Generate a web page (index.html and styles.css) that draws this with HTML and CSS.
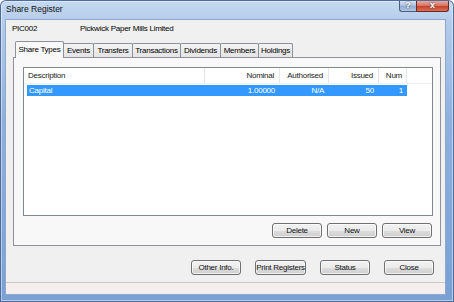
FILE: index.html
```html
<!DOCTYPE html>
<html lang="en">
<head>
  <meta charset="UTF-8" />
  <title>Share Register</title>
  <link rel="stylesheet" href="styles.css">
</head>
<body>
  <div class="window">
    <div class="titlebar">
      <span class="title">Share Register</span>
      <div class="caption-btns">
        <span class="cbtn help">?</span>
        <span class="cbtn close">x</span>
      </div>
    </div>
    <div class="frame">
      <div class="client">
        <div class="company">
          <span class="code">PIC002</span>
          <span class="name">Pickwick Paper Mills Limited</span>
        </div>

        <div class="tabs">
          <span class="tab active">Share Types</span>
          <span class="tab">Events</span>
          <span class="tab">Transfers</span>
          <span class="tab">Transactions</span>
          <span class="tab">Dividends</span>
          <span class="tab">Members</span>
          <span class="tab">Holdings</span>
        </div>

        <div class="panel">
          <div class="list">
            <div class="list-head">
              <span class="col desc">Description</span>
              <span class="col nominal">Nominal</span>
              <span class="col auth">Authorised</span>
              <span class="col issued">Issued</span>
              <span class="col num">Num</span>
              <span class="col filler"></span>
            </div>
            <div class="list-row selected">
              <span class="col desc">Capital</span>
              <span class="col nominal">1.00000</span>
              <span class="col auth">N/A</span>
              <span class="col issued">50</span>
              <span class="col num">1</span>
            </div>
          </div>
          <div class="panel-btns">
            <button class="btn">Delete</button>
            <button class="btn">New</button>
            <button class="btn">View</button>
          </div>
        </div>

        <div class="dialog-btns">
          <button class="btn">Other Info.</button>
          <button class="btn wide">Print Registers</button>
          <button class="btn">Status</button>
          <button class="btn">Close</button>
        </div>

        <div class="statusbar"></div>
      </div>
    </div>
  </div>
</body>
</html>
```

FILE: styles.css
```css
body {
  margin: 0;
  background: #ffffff;
  font-family: "Liberation Sans", Arial, sans-serif;
  font-size: 8px;
  letter-spacing: -0.25px;
  color: #000;
}
.window {
  width: 454px;
  height: 302px;
  box-sizing: border-box;
  background: linear-gradient(#c6d9f0 0%, #b3cbea 8%, #8eb0de 40%, #7aa0d4 100%);
  border-radius: 6px 6px 0 0;
  box-shadow: inset 0 0 0 1px #4d6c9c, inset 0 0 0 2px rgba(255, 255, 255, 0.45);
  display: flex;
  flex-direction: column;
}
.titlebar {
  height: 20px;
  display: flex;
  justify-content: space-between;
  align-items: flex-start;
  padding-left: 6px;
}
.title {
  line-height: 19px;
  font-size: 8.5px;
  letter-spacing: 0;
  color: #111;
}
.caption-btns {
  display: flex;
  margin-right: 5px;
  margin-top: 1px;
}
.cbtn {
  height: 10px;
  line-height: 9px;
  text-align: center;
  color: #fff;
  font-weight: bold;
  font-size: 9px;
  letter-spacing: 0;
  border: 1px solid #4c5f7e;
  border-top: none;
  text-shadow: 0 0 2px #333;
}
.help {
  width: 16px;
  border-radius: 0 0 0 3px;
  background: linear-gradient(#d6e2f1, #a9bfdc 50%, #8fa9cf 51%, #b2c7e3);
  border-right: none;
}
.close {
  width: 31px;
  border-radius: 0 0 3px 0;
  background: linear-gradient(#e9a99c, #d8705d 50%, #c4402a 51%, #d67259);
  border-color: #6e2a22;
}
.frame {
  flex: 1;
  padding: 0 9px 8px 6px;
}
.client {
  width: 439px;
  height: 274px;
  background: #f0f0f0;
  box-shadow: 0 0 0 1px #8ea7cb;
  display: flex;
  flex-direction: column;
}
.company {
  height: 12px;
  line-height: 12px;
  padding: 3px 0 0 6px;
  display: flex;
}
.code {
  width: 68px;
}
.tabs {
  margin-top: 6px;
  height: 16px;
  padding-left: 9px;
  display: flex;
  align-items: flex-end;
  position: relative;
  z-index: 1;
}
.tab {
  box-sizing: border-box;
  height: 14px;
  line-height: 13px;
  text-align: center;
  white-space: nowrap;
  border: 1px solid #8e9199;
  border-bottom: none;
  margin-left: -1px;
  background: linear-gradient(#f3f3f3, #e4e4e4);
  border-radius: 2px 2px 0 0;
}
.tab:nth-child(1) { width: 49px; margin-left: 0; }
.tab:nth-child(2) { width: 31px; }
.tab:nth-child(3) { width: 40px; }
.tab:nth-child(4) { width: 49px; }
.tab:nth-child(5) { width: 41px; }
.tab:nth-child(6) { width: 39px; }
.tab:nth-child(7) { width: 35px; }
.tab.active {
  height: 17px;
  line-height: 15px;
  margin-bottom: -1px;
  background: #f8f8f8;
}
.panel {
  margin-left: 7px;
  width: 428px;
  height: 189px;
  box-sizing: border-box;
  border: 1px solid #8e9199;
  background: #f8f8f8;
  padding: 9px 0 0 9px;
}
.list {
  width: 410px;
  height: 149px;
  box-sizing: border-box;
  border: 1px solid #828790;
  background: #fff;
}
.list-head {
  height: 15px;
  display: flex;
  line-height: 15px;
  color: #222;
  border-bottom: 1px solid #eef0f3;
}
.list-head .col {
  border-right: 1px solid #e3e6eb;
}
.col {
  box-sizing: border-box;
  white-space: nowrap;
}
.desc {
  width: 181px;
  padding-left: 4px;
}
.nominal {
  width: 75px;
  text-align: right;
  padding-right: 5px;
}
.auth {
  width: 49px;
  text-align: right;
  padding-right: 5px;
}
.issued {
  width: 50px;
  text-align: right;
  padding-right: 5px;
}
.num {
  width: 28px;
  text-align: right;
  padding-right: 4px;
}
.list-head .filler {
  flex: 1;
  border-right: none;
}
.list-row {
  display: flex;
  height: 11px;
  line-height: 11px;
  margin: 1px 0 0 3px;
}
.list-row .desc {
  width: 178px;
  padding-left: 2px;
}
.list-row.selected {
  width: 380px;
  background: #3399ff;
  color: #fff;
}
.panel-btns {
  width: 410px;
  margin-top: 7px;
  display: flex;
  justify-content: flex-end;
  gap: 5px;
}
.panel-btns .btn:last-child {
  margin-right: 1px;
}
.btn {
  height: 15px;
  width: 50px;
  padding: 0;
  margin: 0;
  font-family: inherit;
  font-size: 8px;
  letter-spacing: -0.25px;
  white-space: nowrap;
  line-height: 13px;
  color: #111;
  border: 1px solid #707070;
  border-radius: 3px;
  background: linear-gradient(#f2f2f2 0%, #ebebeb 50%, #dddddd 51%, #cfcfcf 100%);
  box-shadow: inset 0 0 0 1px rgba(255, 255, 255, 0.7);
}
.btn.wide {
  width: 51px;
}
.dialog-btns {
  margin-top: 14px;
  padding-right: 11px;
  display: flex;
  justify-content: flex-end;
  gap: 14px;
}
.statusbar {
  margin-top: 7px;
  flex: 1;
  border-top: 1px solid #c9c9c9;
  background: #f4efee;
}
```
